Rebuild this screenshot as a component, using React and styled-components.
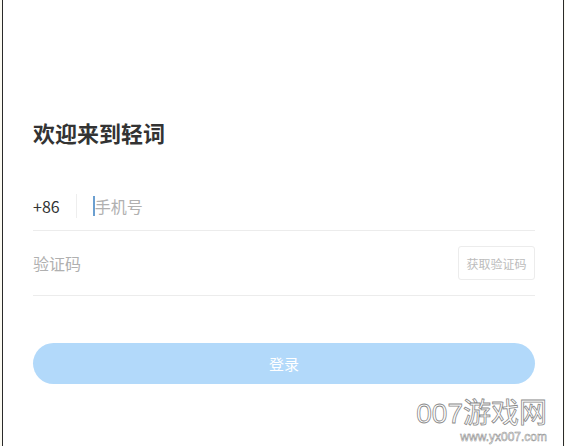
import React from 'react'
import styled, { createGlobalStyle } from 'styled-components'

const Global = createGlobalStyle`
  html, body {
    margin: 0;
    padding: 0;
    background: #fbfaf2;
  }
  * { box-sizing: border-box; }
`

const Frame = styled.div`
  position: relative;
  margin-left: 2px;
  width: 562px;
  height: 446px;
  background: #fff;
  border-left: 1px solid #2a2a2a;
  border-right: 1px solid #2a2a2a;
  font-family: "Noto Sans CJK SC", "Noto Sans", sans-serif;
  padding: 113px 28px 0 30px;
  overflow: hidden;
`

const Title = styled.h1`
  margin: 0;
  font-size: 22px;
  line-height: 38px;
  font-weight: 700;
  color: #333;
`

const Form = styled.div`
  margin-top: 30px;
  display: flex;
  flex-direction: column;
`

const Row = styled.div`
  display: flex;
  align-items: center;
  height: ${p => p.$h}px;
  border-bottom: 1px solid #ececec;
`

const Prefix = styled.span`
  font-size: 16px;
  color: #333;
  padding-right: 16px;
  border-right: 1px solid #eee;
  line-height: 24px;
`

const Field = styled.span`
  display: flex;
  align-items: center;
  font-size: 16px;
  color: #b0b0b0;
  margin-left: ${p => p.$ml || 0}px;
  flex: 1;
`

const Caret = styled.i`
  display: inline-block;
  width: 2px;
  height: 20px;
  background: #6b9fd0;
`

const CodeButton = styled.span`
  display: flex;
  align-items: center;
  justify-content: center;
  width: 77px;
  height: 34px;
  border: 1px solid #ececec;
  border-radius: 3px;
  font-size: 12px;
  color: #bcbcbc;
`

const Login = styled.button`
  margin-top: 47px;
  width: 100%;
  height: 41px;
  border: none;
  border-radius: 21px;
  background: #b2d9fa;
  color: #fff;
  font-family: inherit;
  font-size: 15px;
`

const Mark = styled.div`
  position: absolute;
  right: 16px;
  bottom: 3px;
  display: flex;
  flex-direction: column;
  align-items: flex-end;
  gap: 3px;
  color: #fff;
  -webkit-text-stroke: 0.8px #8a8a8a;
  font-family: "Liberation Sans", "Noto Sans CJK SC", sans-serif;
`

const MarkBig = styled.span`
  font-size: 28px;
  line-height: 28px;
`

const MarkSmall = styled.span`
  font-size: 12px;
  line-height: 12px;
  -webkit-text-stroke: 0.5px #8a8a8a;
`

export default function App() {
  return (
    <>
      <Global />
      <Frame>
        <Title>欢迎来到轻词</Title>
        <Form>
          <Row $h={50}>
            <Prefix>+86</Prefix>
            <Field $ml={16}><Caret />手机号</Field>
          </Row>
          <Row $h={65}>
            <Field>验证码</Field>
            <CodeButton>获取验证码</CodeButton>
          </Row>
        </Form>
        <Login>登录</Login>
        <Mark>
          <MarkBig>007游戏网</MarkBig>
          <MarkSmall>www.yx007.com</MarkSmall>
        </Mark>
      </Frame>
    </>
  )
}
